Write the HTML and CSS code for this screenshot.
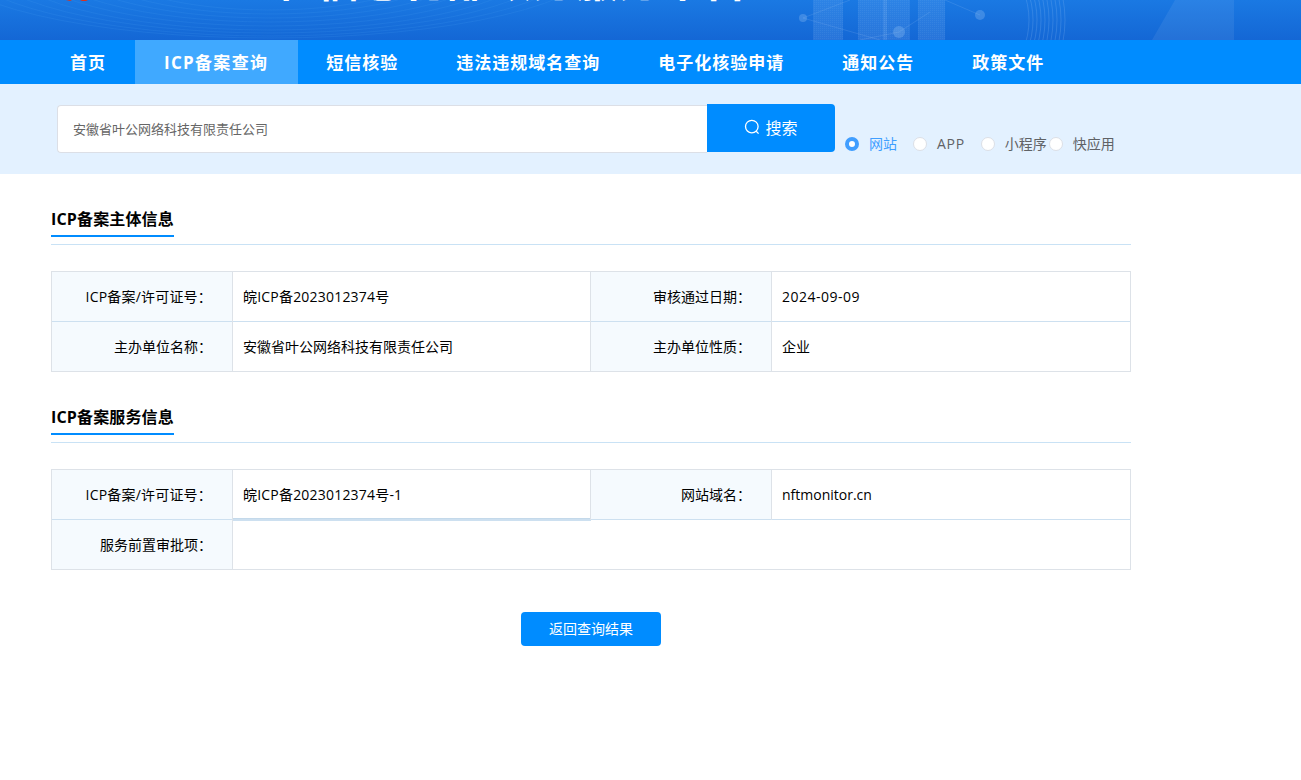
FILE: index.html
```html
<!DOCTYPE html>
<html lang="zh-CN">
<head>
<meta charset="utf-8">
<title>ICP备案查询</title>
<link rel="stylesheet" href="styles.css">
</head>
<body>
<header class="banner">
  <svg class="banner-art" width="1301" height="40" viewBox="0 0 1301 40" aria-hidden="true">
    <defs>
      <pattern id="mesh" width="2" height="2" patternUnits="userSpaceOnUse">
        <rect width="2" height="2" fill="#8fbdf2" fill-opacity=".16"/>
        <rect width="1" height="1" fill="#cfe3fb" fill-opacity=".07"/>
      </pattern>
      <clipPath id="arc-clip"><rect x="1008" y="0" width="70" height="40"/></clipPath>
    </defs>
    <g fill="none" stroke="#4aa0f0" stroke-opacity=".16" stroke-width="1">
      <ellipse cx="270" cy="-40" rx="170" ry="50"/>
      <ellipse cx="270" cy="-40" rx="190" ry="54"/>
      <ellipse cx="270" cy="-40" rx="210" ry="58"/>
      <ellipse cx="270" cy="-40" rx="230" ry="62"/>
      <ellipse cx="270" cy="-40" rx="250" ry="66"/>
      <ellipse cx="270" cy="-40" rx="270" ry="70"/>
      <ellipse cx="270" cy="-40" rx="290" ry="73"/>
      <ellipse cx="270" cy="-40" rx="310" ry="76"/>
      <ellipse cx="270" cy="-40" rx="330" ry="78"/>
    </g>
    <g fill="url(#mesh)">
      <rect x="813" y="0" width="30" height="40"/>
      <rect x="858" y="0" width="29" height="40"/>
      <rect x="883" y="0" width="27" height="40"/>
      <rect x="918" y="0" width="27" height="40"/>
    </g>
    <g fill="#8fbdf2" fill-opacity=".32">
      <circle cx="803" cy="18" r="4"/>
      <circle cx="980" cy="15" r="5"/>
      <circle cx="899" cy="32" r="6"/>
    </g>
    <g fill="none" stroke="#9cc6f5" stroke-opacity=".22" stroke-width=".8">
      <path d="M803 18 L850 0M803 18 L880 40M980 15 L945 0M899 32 L930 12M899 32 L860 40"/>
    </g>
    <g fill="none" stroke="#9cc6f5" stroke-opacity=".3" stroke-width=".7" clip-path="url(#arc-clip)">
      <circle cx="950" cy="20" r="115"/>
      <circle cx="950" cy="20" r="111"/>
      <circle cx="950" cy="20" r="107"/>
      <circle cx="950" cy="20" r="103"/>
      <circle cx="950" cy="20" r="99"/>
      <circle cx="950" cy="20" r="95"/>
      <circle cx="950" cy="20" r="91"/>
      <circle cx="950" cy="20" r="87"/>
      <circle cx="950" cy="20" r="83"/>
      <circle cx="950" cy="20" r="79"/>
    </g>
    <path d="M1175 0H1234V40H1152Z" fill="#fff" fill-opacity=".07"/>
    <path d="M66 1 L70 0H72L70 1ZM80 0H88L86 1H82Z" fill="#d8321f"/>
  </svg>
  <h1 class="site-title">工业和信息化部政务服务平台</h1>
</header>
<nav class="nav">
  <a class="nav-item">首页</a>
  <a class="nav-item is-active">ICP备案查询</a>
  <a class="nav-item">短信核验</a>
  <a class="nav-item">违法违规域名查询</a>
  <a class="nav-item">电子化核验申请</a>
  <a class="nav-item">通知公告</a>
  <a class="nav-item">政策文件</a>
</nav>
<section class="search-bar">
  <div class="search-input">安徽省叶公网络科技有限责任公司</div>
  <button class="search-btn" type="button">
    <svg width="16" height="16" viewBox="0 0 16 16" fill="none" stroke="#fff" stroke-width="1.3" aria-hidden="true">
      <circle cx="7.8" cy="7.6" r="6.3"/>
      <path d="M12.2 12.2 L14.6 14.6"/>
    </svg>
    <span>搜索</span>
  </button>
  <div class="radios">
    <label class="radio is-on"><i class="dot"></i>网站</label>
    <label class="radio radio-latin"><i class="dot"></i>APP</label>
    <label class="radio radio-tight"><i class="dot"></i>小程序</label>
    <label class="radio"><i class="dot"></i>快应用</label>
  </div>
</section>
<main class="content">
  <h2 class="section-title"><span>ICP备案主体信息</span></h2>
  <table class="info">
    <tr>
      <th class="mix">ICP备案/许可证号：</th><td class="col-a mix">皖ICP备2023012374号</td>
      <th>审核通过日期：</th><td class="num">2024-09-09</td>
    </tr>
    <tr>
      <th>主办单位名称：</th><td class="col-a">安徽省叶公网络科技有限责任公司</td>
      <th>主办单位性质：</th><td>企业</td>
    </tr>
  </table>
  <h2 class="section-title"><span>ICP备案服务信息</span></h2>
  <table class="info">
    <tr>
      <th class="mix">ICP备案/许可证号：</th><td class="col-a mix cell-raised">皖ICP备2023012374号-1</td>
      <th>网站域名：</th><td>nftmonitor.cn</td>
    </tr>
    <tr>
      <th>服务前置审批项：</th><td colspan="3"></td>
    </tr>
  </table>
  <div class="actions"><button class="back-btn" type="button">返回查询结果</button></div>
</main>
</body>
</html>
```
FILE: styles.css
```css
* { box-sizing: border-box; }
html, body { margin: 0; padding: 0; height: 100%; overflow: hidden; background: #fff; }
body { font-family: "Open Sans", "Noto Sans CJK SC", sans-serif; color: #000; }

.banner {
  position: relative;
  height: 40px;
  overflow: hidden;
  background: linear-gradient(180deg, #1a79e3 0%, #1467d5 100%);
}
.banner-art { position: absolute; left: 0; top: 0; display: block; }
.site-title {
  position: absolute;
  left: 188px;
  top: -43px;
  margin: 0;
  font-size: 43px;
  line-height: 48px;
  font-weight: 700;
  color: #fff;
  white-space: nowrap;
}

.nav {
  display: flex;
  height: 44px;
  padding-left: 41px;
  background: #008cff;
}
.nav-item {
  padding: 1px 29px 0;
  font-size: 17px;
  font-weight: 700;
  letter-spacing: 1px;
  line-height: 43px;
  color: #fff;
  white-space: nowrap;
}
.nav-item.is-active {
  padding-right: 30px;
  margin-right: -1px;
  background: #40a9ff;
  letter-spacing: 1.3px;
}

.search-bar {
  display: flex;
  height: 90px;
  padding: 20px 0 0 57px;
  background: #e3f1ff;
}
.search-input {
  width: 650px;
  height: 48px;
  margin-top: 1px;
  padding-left: 15px;
  border: 1px solid #dcdfe6;
  border-right: 0;
  border-radius: 4px 0 0 4px;
  background: #fff;
  font-size: 13px;
  line-height: 46px;
  color: #666;
}
.search-btn {
  display: flex;
  align-items: center;
  justify-content: center;
  gap: 5px;
  width: 128px;
  height: 48px;
  padding: 0 0 2px;
  border: 0;
  border-radius: 0 4px 4px 0;
  background: #008cff;
  color: #fff;
  font-family: inherit;
  font-size: 16px;
}
.radios { display: flex; align-items: center; height: 20px; margin: 30px 0 0 10px; }
.radio {
  display: flex;
  align-items: center;
  gap: 10px;
  margin-right: 16px;
  font-size: 14px;
  line-height: 20px;
  color: #606266;
  white-space: nowrap;
}
.radio-latin { letter-spacing: .7px; }
.radio-tight { margin-right: 2px; }
.dot {
  display: block;
  width: 14px;
  height: 14px;
  border: 1px solid #dcdfe6;
  border-radius: 50%;
  background: #fff;
}
.is-on { color: #409eff; }
.is-on .dot {
  border: 4.5px solid #409eff;
  background: #fff;
}

.content { width: 1080px; margin-left: 51px; padding-top: 33px; }
.section-title {
  margin: 0 0 26px;
  height: 38px;
  border-bottom: 1px solid #c9e2f5;
  font-size: 16px;
  font-weight: 700;
  line-height: 24px;
}
.section-title span {
  display: inline-block;
  height: 30px;
  letter-spacing: .15px;
  border-bottom: 2px solid #008cff;
}
.info {
  width: 1080px;
  margin-bottom: 33px;
  border-collapse: collapse;
  table-layout: fixed;
  border: 1px solid #dde2e8;
  font-size: 14px;
  line-height: 20px;
}
.info tr { height: 50px; }
.info tr + tr th, .info tr + tr td { border-top: 1px solid #cde0f0; }
.info th, .info td {
  border-left: 1px solid #dde2e8;
  border-right: 1px solid #dde2e8;
  padding: 0;
}
.info th {
  width: 181px;
  padding-right: 20px;
  background: #f5fafe;
  font-weight: 400;
  text-align: right;
}
.info td { padding-left: 10px; }
.info .col-a { width: 358px; }
.info .mix { letter-spacing: .2px; }
.info .num { letter-spacing: .5px; }
.cell-raised { box-shadow: inset 0 -1px 0 #c4d9ea, 0 1px 0 #cde0f0; }

.actions { display: flex; justify-content: center; padding-top: 9px; }
.back-btn {
  width: 140px;
  height: 34px;
  padding: 0 0 2px;
  border: 0;
  border-radius: 4px;
  background: #008cff;
  color: #fff;
  font-family: inherit;
  font-size: 14px;
}
```
